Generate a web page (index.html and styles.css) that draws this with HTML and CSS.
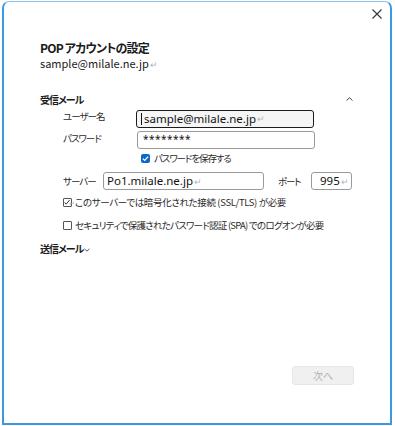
FILE: index.html
```html
<!DOCTYPE html>
<html lang="ja">
<head>
<meta charset="utf-8">
<link rel="stylesheet" href="styles.css">
</head>
<body>
<div class="window">
  <div class="titlebar">
    <svg class="close" width="10" height="10" viewBox="0 0 10 10"><path d="M0.5 0.5L9.5 9.5M9.5 0.5L0.5 9.5" stroke="#333" stroke-width="1.1" fill="none"/></svg>
  </div>
  <div class="content">
    <div class="title">POP アカウントの設定</div>
    <div class="account">sample@milale.ne.jp<span class="ret">↵</span></div>

    <div class="section-head">
      <span>受信メール</span>
      <svg class="caret" width="7" height="4" viewBox="0 0 7 4"><path d="M0.5 3.5L3.5 0.7L6.5 3.5" stroke="#444" stroke-width="1" fill="none"/></svg>
    </div>

    <div class="row row-user">
      <span class="label">ユーザー名</span>
      <div class="input focused"><span class="cursor"></span>sample@milale.ne.jp<span class="ret">↵</span></div>
    </div>
    <div class="row row-pass">
      <span class="label">パスワード</span>
      <div class="input pass">********</div>
    </div>
    <div class="row row-save">
      <span class="cb checked"><svg width="9" height="9" viewBox="0 0 9 9"><path d="M1.8 4.6L3.7 6.4L7.2 2.6" stroke="#fff" stroke-width="1.3" fill="none"/></svg></span>
      <span class="cb-label save-label">パスワードを保存する</span>
    </div>
    <div class="row row-server">
      <span class="label short">サーバー</span>
      <div class="input server">Po1.milale.ne.jp<span class="ret">↵</span></div>
      <span class="port-label">ポート</span>
      <div class="input port">995<span class="ret">↵</span></div>
    </div>
    <div class="row row-ssl">
      <span class="cb outline"><svg width="9" height="9" viewBox="0 0 9 9"><path d="M1.8 4.4L3.6 6.4L7.4 1.8" stroke="#222" stroke-width="1" fill="none"/></svg></span>
      <span class="cb-label"><span class="ret small">↵</span>このサーバーでは暗号化された接続 (SSL/TLS) が必要</span>
    </div>
    <div class="row row-spa">
      <span class="cb outline"></span>
      <span class="cb-label">セキュリティで保護されたパスワード認証 (SPA) でのログオンが必要</span>
    </div>

    <div class="section-head send">
      <span>送信メール</span>
      <svg class="caret-down" width="6" height="4" viewBox="0 0 6 4"><path d="M0.5 0.8L3 3.2L5.5 0.8" stroke="#444" stroke-width="0.9" fill="none"/></svg>
    </div>
  </div>
  <div class="footer">
    <button class="next">次へ</button>
  </div>
</div>
</body>
</html>
```

FILE: styles.css
```css
* { box-sizing: border-box; }
html, body { margin: 0; padding: 0; background: #fff; }
body {
  width: 395px;
  height: 426px;
  overflow: hidden;
  font-family: "Noto Sans CJK JP", "Noto Sans", sans-serif;
  font-feature-settings: "palt";
  color: #1a1a1a;
}
.window {
  position: relative;
  margin: 1px 0 0 2px;
  width: 390px;
  height: 424px;
  border: 2px solid #3d98e2;
  border-top: 1px solid #8cc2ee;
  border-radius: 7px 7px 0 0;
  background: #fff;
  display: flex;
  flex-direction: column;
}
.titlebar {
  height: 30px;
  display: flex;
  justify-content: flex-end;
  align-items: flex-start;
  padding: 7px 8px 0 0;
}
.close { display: block; }
.content {
  padding-left: 36px;
  flex: 1;
}
.title {
  margin-top: 8px;
  font-size: 12px;
  font-weight: 700;
  line-height: 16px;
  letter-spacing: -0.8px;
}
.account {
  font-size: 11px;
  line-height: 14px;
}
.ret { color: #b5b5b5; font-size: 9px; margin-left: 1px; letter-spacing: 0; }
.ret.small { margin: 0 0 0 -3px; font-size: 7px; }
.section-head {
  margin-top: 21px;
  font-size: 10px;
  font-weight: 700;
  line-height: 14px;
  letter-spacing: -1px;
  display: flex;
  align-items: center;
  width: 317px;
  justify-content: space-between;
}
.section-head.send {
  margin-top: 11px;
  justify-content: flex-start;
  gap: 1px;
}
.caret { margin-right: 4px; margin-top: -2px; }
.caret-down { margin-top: 1px; }
.row {
  display: flex;
  align-items: center;
  padding-left: 23px;
  font-size: 9.5px;
}
.label {
  width: 73px;
  color: #2a2a2a;
  font-size: 9.5px;
  letter-spacing: -1px;
  align-self: flex-start;
  line-height: 12px;
}
.input {
  height: 18px;
  border: 1px solid #9a9a9a;
  border-radius: 3px;
  background: #fff;
  font-family: "Noto Sans", "Noto Sans CJK JP", sans-serif;
  font-size: 11.5px;
  line-height: 16px;
  padding-left: 6px;
  white-space: nowrap;
  color: #111;
}
.row-user { margin-top: 3px; }
.input.focused {
  width: 178px;
  border: 1.5px solid #1c1c1c;
  background: #f5f5f5;
  padding-left: 4px;
  border-radius: 3px;
  display: flex;
  align-items: center;
}
.cursor {
  display: inline-block;
  width: 1px;
  height: 12px;
  background: #111;
  margin-right: 2px;
}
.row-pass { margin-top: 3px; }
.row-pass .label { margin-top: 1px; }
.input.pass {
  width: 178px;
  margin-left: 1px;
  font-size: 10px;
  letter-spacing: 0.5px;
  line-height: 14px;
  padding-left: 5px;
}
.row-save {
  margin-top: 4px;
  padding-left: 101px;
  height: 10px;
}
.cb {
  width: 9px;
  height: 9px;
  display: inline-flex;
  flex: none;
}
.cb svg { display: block; }
.cb.checked {
  background: #0a69c9;
  border-radius: 2px;
}
.cb.outline {
  border: 1px solid #555;
  border-radius: 1px;
  width: 9px;
  height: 9px;
}
.cb.outline svg { margin: -1px 0 0 -1px; }
.cb-label {
  margin-left: 4px;
  font-size: 9.5px;
  letter-spacing: -0.35px;
  color: #2a2a2a;
  line-height: 12px;
  white-space: nowrap;
}
.cb-label.save-label { letter-spacing: -1.1px; }
.row-server { margin-top: 9px; }
.label.short { width: 40px; align-self: center; }
.input.server {
  width: 161px;
  padding-left: 3px;
}
.port-label {
  margin-left: 14px;
  width: 33px;
  color: #2a2a2a;
  letter-spacing: -1.2px;
}
.input.port {
  width: 41px;
  padding-left: 8px;
}
.row-ssl {
  margin-top: 6px;
  height: 12px;
}
.row-ssl .cb-label { margin-left: 0; }
.row-spa {
  margin-top: 11px;
  height: 12px;
}
.row-spa .cb-label { margin-left: 3px; letter-spacing: -0.75px; }
.footer {
  display: flex;
  justify-content: flex-end;
  padding: 0 36px 38px 0;
}
.next {
  width: 62px;
  height: 19px;
  border: 1px solid #e6e6e6;
  border-radius: 3px;
  background: #f0f0f0;
  color: #b0b0b0;
  font-family: "Noto Sans CJK JP", sans-serif;
  font-feature-settings: "palt";
  font-size: 10px;
  padding: 0;
}
```
